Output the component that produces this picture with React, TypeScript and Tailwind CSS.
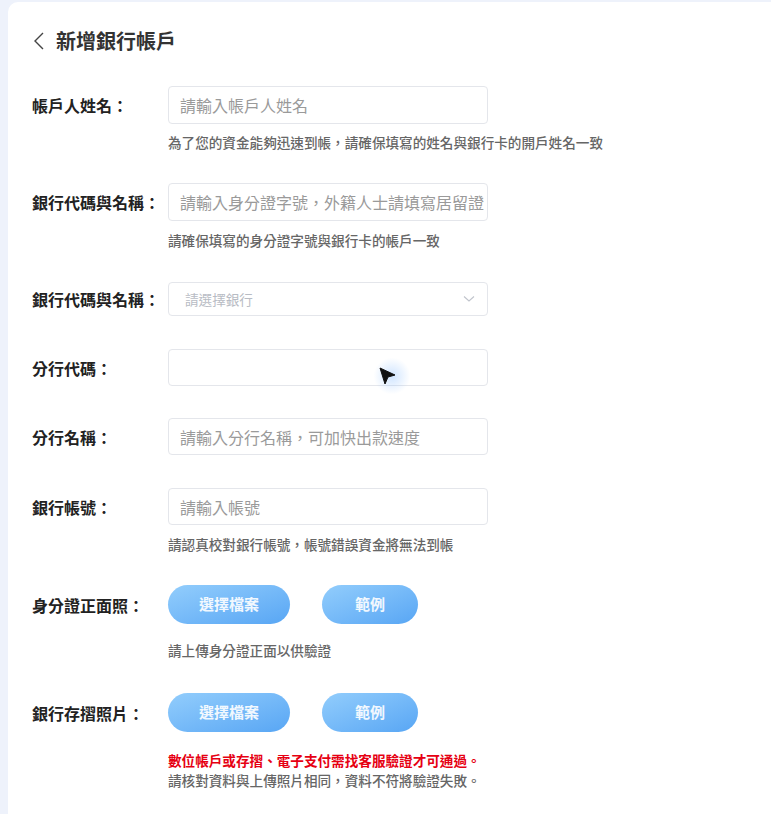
import React from "react";

const font = { fontFamily: '"Noto Sans CJK TC", "Noto Sans", sans-serif' };

function Label({ children }: { children: React.ReactNode }) {
  return (
    <div className="w-[136px] shrink-0 text-[16px] font-bold text-[#222] leading-[22px]">
      {children}
    </div>
  );
}

function TextInput({ placeholder, h = "h-[38px]" }: { placeholder?: string; h?: string }) {
  return (
    <div
      className={`w-[320px] ${h} rounded-[4px] border border-[#e4e6eb] bg-white px-[11px] flex items-center overflow-hidden`}
    >
      {placeholder && (
        <span className="whitespace-nowrap text-[16px] text-[#9a9a9a]">{placeholder}</span>
      )}
    </div>
  );
}

function Hint({ children, className = "" }: { children: React.ReactNode; className?: string }) {
  return (
    <div className={`ml-[136px] text-[13.6px] leading-[18px] font-medium text-[#666] ${className}`}>
      {children}
    </div>
  );
}

function Btn({ children, w }: { children: React.ReactNode; w: string }) {
  return (
    <div
      className={`${w} h-[39px] rounded-full bg-gradient-to-br from-[#92cdfc] to-[#58a6f4] flex items-center justify-center text-white/90 font-bold text-[15px]`}
    >
      {children}
    </div>
  );
}

export default function App() {
  return (
    <div className="h-[814px] w-full overflow-hidden bg-[#eef2fb] pl-2 pt-[2px]" style={font}>
      <div className="relative h-full rounded-tl-[10px] bg-white pl-6 pt-[26px]">
        {/* Header */}
        <div className="flex items-center h-[26px]">
          <svg width="12" height="18" viewBox="0 0 12 18" className="ml-[1px]">
            <path d="M10 1 L2 9 L10 17" fill="none" stroke="#444" strokeWidth="1.4" />
          </svg>
          <div className="ml-[11px] text-[20px] font-bold text-[#333] leading-[26px]">新增銀行帳戶</div>
        </div>

        {/* Row 1 */}
        <div className="mt-[32px] flex items-center">
          <Label>帳戶人姓名：</Label>
          <TextInput placeholder="請輸入帳戶人姓名" />
        </div>
        <Hint className="mt-[9px]">為了您的資金能夠迅速到帳，請確保填寫的姓名與銀行卡的開戶姓名一致</Hint>

        {/* Row 2 */}
        <div className="mt-[32px] flex items-center">
          <Label>銀行代碼與名稱：</Label>
          <TextInput placeholder="請輸入身分證字號，外籍人士請填寫居留證" />
        </div>
        <Hint className="mt-[10px]">請確保填寫的身分證字號與銀行卡的帳戶一致</Hint>

        {/* Row 3 select */}
        <div className="mt-[33px] flex items-center">
          <Label>銀行代碼與名稱：</Label>
          <div className="w-[320px] h-[34px] rounded-[4px] border border-[#e4e6eb] bg-white pl-[16px] pr-[12px] flex items-center justify-between">
            <span className="text-[13.6px] text-[#b8bcc4]">請選擇銀行</span>
            <svg width="12" height="8" viewBox="0 0 12 8">
              <path d="M1 1.5 L6 6 L11 1.5" fill="none" stroke="#c0c4cc" strokeWidth="1.1" />
            </svg>
          </div>
        </div>

        {/* Row 4 */}
        <div className="mt-[33px] flex items-center">
          <Label>分行代碼：</Label>
          <TextInput h="h-[37px]" />
        </div>

        {/* Row 5 */}
        <div className="mt-[32px] flex items-center">
          <Label>分行名稱：</Label>
          <TextInput h="h-[37px]" placeholder="請輸入分行名稱，可加快出款速度" />
        </div>

        {/* Row 6 */}
        <div className="mt-[33px] flex items-center">
          <Label>銀行帳號：</Label>
          <TextInput h="h-[37px]" placeholder="請輸入帳號" />
        </div>
        <Hint className="mt-[10px]">請認真校對銀行帳號，帳號錯誤資金將無法到帳</Hint>

        {/* Row 7 */}
        <div className="mt-[32px] flex items-center">
          <Label>身分證正面照：</Label>
          <div className="flex items-center gap-[32px]">
            <Btn w="w-[122px]">選擇檔案</Btn>
            <Btn w="w-[96px]">範例</Btn>
          </div>
        </div>
        <Hint className="mt-[17px]">請上傳身分證正面以供驗證</Hint>

        {/* Row 8 */}
        <div className="mt-[34px] flex items-center">
          <Label>銀行存摺照片：</Label>
          <div className="flex items-center gap-[32px]">
            <Btn w="w-[122px]">選擇檔案</Btn>
            <Btn w="w-[96px]">範例</Btn>
          </div>
        </div>
        <div className="ml-[136px] mt-[18px] text-[13.6px] leading-[20px] font-bold text-[#e60012]">
          數位帳戶或存摺、電子支付需找客服驗證才可通過。
        </div>
        <div className="ml-[136px] text-[13.6px] leading-[20px] font-medium text-[#666]">
          請核對資料與上傳照片相同，資料不符將驗證失敗。
        </div>

        {/* Mouse cursor overlay */}
        <div className="absolute left-[364px] top-[354px] h-[40px] w-[40px] rounded-full bg-[radial-gradient(circle,rgba(120,180,255,0.35)_0%,rgba(120,180,255,0)_65%)]" />
        <svg className="absolute left-[371px] top-[365px]" width="18" height="20" viewBox="0 0 18 20">
          <path d="M1 1 L16 8 L9 10 L6 17 Z" fill="#111" stroke="#111" strokeWidth="1" strokeLinejoin="round" />
        </svg>
      </div>
    </div>
  );
}
